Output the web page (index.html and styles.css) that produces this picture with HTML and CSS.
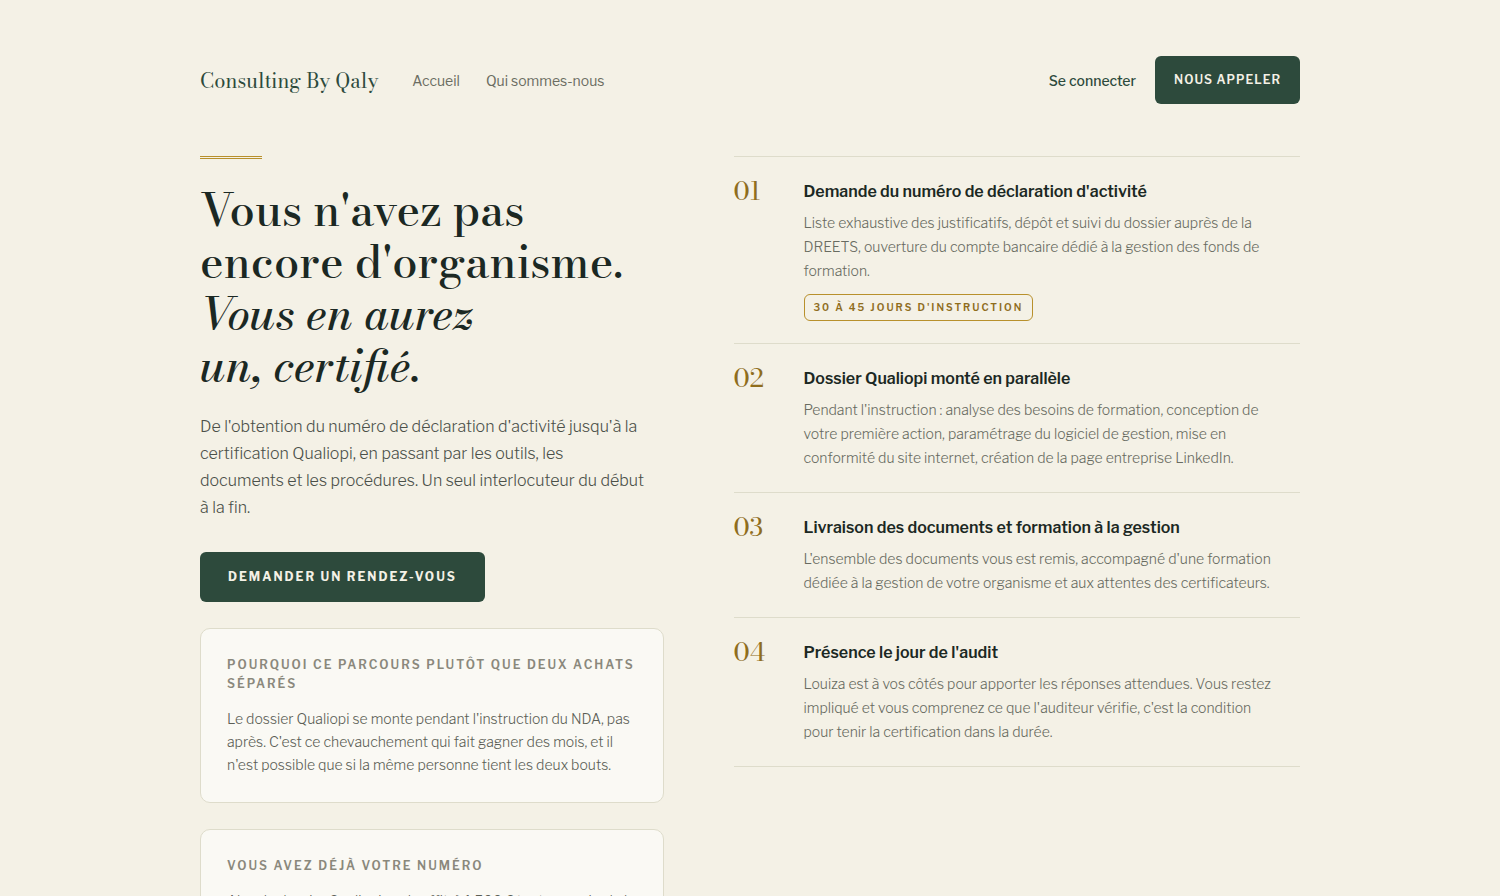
FILE: index.html
```
<!DOCTYPE html>
<html lang="fr">
<head>
    <meta charset="UTF-8">
    <meta name="viewport" content="width=device-width, initial-scale=1.0">
    <title>Consulting By Qaly</title>
    <link rel="stylesheet" href="styles.css">
</head>
<body>
    <div class="container">
        <header class="header">
            <a href="#" class="logo">Consulting By Qaly</a>
            <nav class="nav">
                <a href="#accueil">Accueil</a>
                <a href="#qui">Qui sommes-nous</a>
            </nav>
            <div class="header-actions">
                <a href="#connexion" class="login">Se connecter</a>
                <button type="button" class="btn btn-small">Nous appeler</button>
            </div>
        </header>

        <main class="parcours">
            <section class="intro">
                <h1>Vous n'avez pas encore d'organisme. <em>Vous en aurez un,&nbsp;certifié.</em></h1>
                <p class="lead">De l'obtention du numéro de déclaration d'activité jusqu'à la certification Qualiopi, en passant par les outils, les documents et les procédures. Un seul interlocuteur du début à la fin.</p>
                <button type="button" class="btn">Demander un rendez-vous</button>

                <div class="card">
                    <h2>Pourquoi ce parcours plutôt que deux achats séparés</h2>
                    <p>Le dossier Qualiopi se monte pendant l'instruction du NDA, pas après. C'est ce chevauchement qui fait gagner des mois, et il n'est possible que si la même personne tient les deux bouts.</p>
                </div>
                <div class="card">
                    <h2>Vous avez déjà votre numéro</h2>
                    <p>Alors le dossier Qualiopi seul suffit, à 1 500 € tout compris, de la préparation à l'audit.</p>
                </div>
            </section>

            <ol class="steps">
                <li class="step">
                    <span class="number">01</span>
                    <div class="step-body">
                        <h3>Demande du numéro de déclaration d'activité</h3>
                        <p>Liste exhaustive des justificatifs, dépôt et suivi du dossier auprès de la DREETS, ouverture du compte bancaire dédié à la gestion des fonds de formation.</p>
                        <span class="tag">30 à 45 jours d'instruction</span>
                    </div>
                </li>
                <li class="step">
                    <span class="number">02</span>
                    <div class="step-body">
                        <h3>Dossier Qualiopi monté en parallèle</h3>
                        <p>Pendant l'instruction : analyse des besoins de formation, conception de votre première action, paramétrage du logiciel de gestion, mise en conformité du site internet, création de la page entreprise LinkedIn.</p>
                    </div>
                </li>
                <li class="step">
                    <span class="number">03</span>
                    <div class="step-body">
                        <h3>Livraison des documents et formation à la gestion</h3>
                        <p>L'ensemble des documents vous est remis, accompagné d'une formation dédiée à la gestion de votre organisme et aux attentes des certificateurs.</p>
                    </div>
                </li>
                <li class="step">
                    <span class="number">04</span>
                    <div class="step-body">
                        <h3>Présence le jour de l'audit</h3>
                        <p>Louiza est à vos côtés pour apporter les réponses attendues. Vous restez impliqué et vous comprenez ce que l'auditeur vérifie, c'est la condition pour tenir la certification dans la durée.</p>
                    </div>
                </li>
            </ol>
        </main>
    </div>
</body>
</html>
```
FILE: styles.css
```
* {
    box-sizing: border-box;
}

body {
    margin: 0;
    background: #f4f1e6;
    color: #1b2823;
    font-family: "Libre Franklin", Inter, sans-serif;
    font-size: 14px;
    font-weight: 300;
}

h1, h2, h3, p, ol {
    margin: 0;
    padding: 0;
}

a {
    text-decoration: none;
}

.container {
    max-width: 1148px;
    margin: 0 auto;
    padding: 56px 24px;
}

/* Header */
.header {
    display: flex;
    align-items: center;
    margin-bottom: 52px;
    font-weight: 400;
}

.logo,
h1,
.number {
    font-family: "Bodoni Moda", "Liberation Serif", serif;
}

.logo {
    color: #2d4a3c;
    font-size: 20px;
}

.nav {
    display: flex;
    gap: 26px;
    margin-left: 34px;
}

.nav a {
    color: #6b6d62;
}

.header-actions {
    display: flex;
    align-items: center;
    gap: 19px;
    margin-left: auto;
}

.login {
    color: #2d4a3c;
    font-weight: 500;
}

.btn {
    height: 50px;
    padding: 0 28px 2px;
    border: none;
    border-radius: 6px;
    background: #2d4a3c;
    color: #f4f1e6;
    font-family: inherit;
    font-size: 12px;
    font-weight: 700;
    letter-spacing: 2px;
    text-transform: uppercase;
    cursor: pointer;
}

.btn-small {
    height: 48px;
    padding: 0 19px 2px;
    font-weight: 600;
    letter-spacing: 1px;
}

/* Two columns */
.parcours {
    display: grid;
    grid-template-columns: 9fr 11fr;
    gap: 70px;
    align-items: start;
}

.intro::before {
    content: "";
    display: block;
    width: 62px;
    height: 1px;
    margin-bottom: 25px;
    border-top: 1px solid #b8902c;
    border-bottom: 1px solid #b8902c;
}

h1 {
    max-width: 440px;
    margin-bottom: 21px;
    font-size: 45px;
    font-weight: 500;
    line-height: 52px;
}

h1 em {
    display: block;
    max-width: 300px;
}

.lead {
    max-width: 446px;
    margin-bottom: 31px;
    color: #4b5049;
    font-size: 16px;
    line-height: 27px;
}

.card {
    margin-top: 26px;
    padding: 26px;
    border: 1px solid #dedccb;
    border-radius: 10px;
    background: #faf9f4;
}

.card h2 {
    margin-bottom: 14px;
    color: #8a887c;
    font-size: 12px;
    font-weight: 600;
    line-height: 19px;
    letter-spacing: 2px;
    text-transform: uppercase;
}

.card p {
    color: #5c5f56;
    line-height: 23px;
}

/* Steps */
.steps {
    list-style: none;
    border-top: 1px solid #dedccb;
}

.step {
    display: flex;
    gap: 20px;
    padding: 22px 0;
    border-bottom: 1px solid #dedccb;
}

.number {
    flex: 0 0 50px;
    color: #8f6d1d;
    font-size: 26px;
    line-height: 24px;
}

h3 {
    margin-bottom: 6px;
    font-size: 16px;
    font-weight: 600;
    line-height: 26px;
}

.step p {
    max-width: 474px;
    color: #686b61;
    line-height: 24px;
}

.tag {
    display: inline-block;
    margin-top: 11px;
    padding: 0 9px;
    border: 1px solid #b8902c;
    border-radius: 6px;
    color: #8f6d1d;
    font-size: 10px;
    font-weight: 600;
    line-height: 25px;
    letter-spacing: 2px;
    text-transform: uppercase;
}
```
